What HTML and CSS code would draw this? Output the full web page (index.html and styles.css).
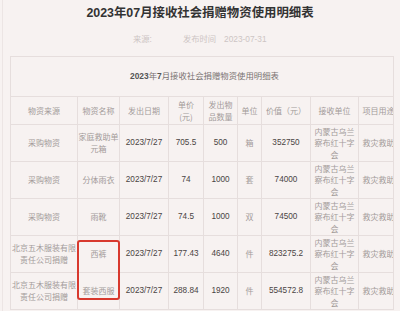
FILE: index.html
```html
<!DOCTYPE html>
<html lang="zh-CN">
<head>
<meta charset="utf-8">
<title>2023年07月接收社会捐赠物资使用明细表</title>
<link rel="stylesheet" href="styles.css">
</head>
<body>
<div class="page">
  <h1 class="title">2023年07月接收社会捐赠物资使用明细表</h1>
  <div class="meta">
    <span class="src">来源:</span>
    <span class="pub">发布时间</span>
    <span class="date">2023-07-31</span>
  </div>
  <div class="wrap">
    <table class="sheet">
      <colgroup>
        <col class="c1"><col class="c2"><col class="c3"><col class="c4"><col class="c5"><col class="c6"><col class="c7"><col class="c8"><col class="c9">
      </colgroup>
      <tr class="cap"><td colspan="9"><b>2023</b>年<b>7</b>月接收社会捐赠物资使用明细表</td></tr>
      <tr class="head">
        <td>物资来源</td><td>物资名称</td><td>发出日期</td><td>单价<br>(元)</td><td>发出物<br>品数量</td><td>单位</td><td>价值（元）</td><td>接收单位</td><td>项目用途</td>
      </tr>
      <tr class="row">
        <td>采购物资</td><td>家庭救助单元箱</td><td class="n">2023/7/27</td><td class="n">705.5</td><td class="n">500</td><td>箱</td><td class="n">352750</td><td class="rc">内蒙古乌兰察布红十字会</td><td>救灾救助</td>
      </tr>
      <tr class="row">
        <td>采购物资</td><td>分体雨衣</td><td class="n">2023/7/27</td><td class="n">74</td><td class="n">1000</td><td>套</td><td class="n">74000</td><td class="rc">内蒙古乌兰察布红十字会</td><td>救灾救助</td>
      </tr>
      <tr class="row">
        <td>采购物资</td><td>雨靴</td><td class="n">2023/7/27</td><td class="n">74.5</td><td class="n">1000</td><td>双</td><td class="n">74500</td><td class="rc">内蒙古乌兰察布红十字会</td><td>救灾救助</td>
      </tr>
      <tr class="row">
        <td>北京五木服装有限责任公司捐赠</td><td>西裤</td><td class="n">2023/7/27</td><td class="n">177.43</td><td class="n">4640</td><td>件</td><td class="n">823275.2</td><td class="rc">内蒙古乌兰察布红十字会</td><td>救灾救助</td>
      </tr>
      <tr class="row">
        <td>北京五木服装有限责任公司捐赠</td><td>套装西服</td><td class="n">2023/7/27</td><td class="n">288.84</td><td class="n">1920</td><td>件</td><td class="n">554572.8</td><td class="rc">内蒙古乌兰察布红十字会</td><td>救灾救助</td>
      </tr>
    </table>
    <div class="mark"></div>
  </div>
</div>
</body>
</html>
```
FILE: styles.css
```css
html, body {
  margin: 0;
  padding: 0;
  background: #f7f2f1;
}
body {
  font-family: "Liberation Sans", "Noto Sans CJK SC", sans-serif;
  color: #333;
  overflow: hidden;
}
.page {
  margin-left: 2px;
  border-left: 1px solid #ece5e4;
  min-height: 311px;
  padding-top: 5px;
  box-sizing: border-box;
}
.title {
  margin: 0 0 0 -3px;
  font-size: 12.4px;
  line-height: 16px;
  font-weight: bold;
  text-align: center;
  color: #333;
}
.meta {
  margin-top: 12px;
  height: 12px;
  line-height: 12px;
  font-size: 8.3px;
  color: #cdc5c4;
  display: flex;
  padding-left: 130px;
}
.meta .pub { margin-left: 31px; }
.meta .date { margin-left: 8px; }
.wrap {
  position: relative;
  margin-top: 11px;
  margin-left: 7px;
  width: 383px;
  border-right: 1px solid #e6dedd;
  overflow: hidden;
}
.sheet {
  border-collapse: collapse;
  table-layout: fixed;
  width: 388px;
  font-family: "Noto Sans CJK SC", "Liberation Sans", sans-serif;
  font-size: 8px;
  line-height: 11.6px;
  color: #a39b9a;
}
.sheet td {
  border: 1px solid #e6dedd;
  padding: 0;
  text-align: center;
  vertical-align: middle;
  overflow: hidden;
}
.c1 { width: 67px; }
.c2 { width: 42px; }
.c3 { width: 49px; }
.c4 { width: 35px; }
.c5 { width: 34px; }
.c6 { width: 24px; }
.c7 { width: 49px; }
.c8 { width: 48px; }
.c9 { width: 40px; }
.sheet .cap td {
  height: 39px;
  font-size: 8.4px;
  color: #7a7372;
}
.sheet .cap b {
  font-family: "Liberation Sans", sans-serif;
  font-weight: bold;
  color: #555;
}
.sheet .head td {
  height: 27px;
  line-height: 12px;
  color: #a39b9a;
}
.sheet .row td {
  height: 36px;
}
.sheet td.rc { padding: 0 3px; }
.sheet td.n {
  font-family: "Liberation Sans", sans-serif;
  color: #4a4443;
  font-size: 8.2px;
}
.mark {
  position: absolute;
  left: 67px;
  top: 184px;
  width: 39px;
  height: 56px;
  border: 2px solid #d8392e;
  border-radius: 3px;
}
```
